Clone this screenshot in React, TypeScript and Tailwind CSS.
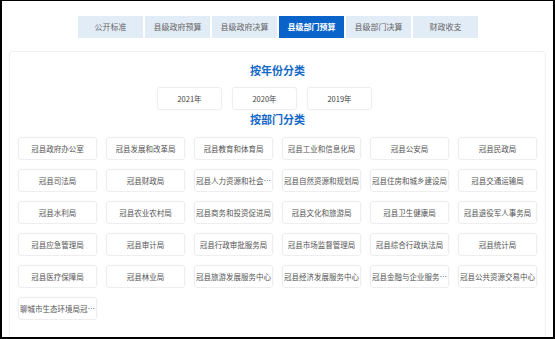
const tabs = ['公开标准', '县级政府预算', '县级政府决算', '县级部门预算', '县级部门决算', '财政收支'];
const years = ['2021年', '2020年', '2019年'];
const depts = [
  '冠县政府办公室', '冠县发展和改革局', '冠县教育和体育局', '冠县工业和信息化局', '冠县公安局', '冠县民政局',
  '冠县司法局', '冠县财政局', '冠县人力资源和社会保障局', '冠县自然资源和规划局', '冠县住房和城乡建设局', '冠县交通运输局',
  '冠县水利局', '冠县农业农村局', '冠县商务和投资促进局', '冠县文化和旅游局', '冠县卫生健康局', '冠县退役军人事务局',
  '冠县应急管理局', '冠县审计局', '冠县行政审批服务局', '冠县市场监督管理局', '冠县综合行政执法局', '冠县统计局',
  '冠县医疗保障局', '冠县林业局', '冠县旅游发展服务中心', '冠县经济发展服务中心', '冠县金融与企业服务中心', '冠县公共资源交易中心',
  '聊城市生态环境局冠县分局',
];

const font = { fontFamily: '"Noto Sans CJK SC", "Noto Sans", sans-serif' };

export default function App() {
  const active = 3;
  return (
    <div className="w-[555px] h-[339px] overflow-hidden bg-white border-l-2 border-r-2 border-t border-b-2 border-black" style={font}>
      {/* Tabs */}
      <div className="flex justify-center gap-[2px] pt-[15px] pl-[1px]">
        {tabs.map((t, i) => (
          <div key={t}
            className={`w-[65px] h-[22px] flex items-center justify-center text-[8px] ${
              i === active ? 'bg-[#0a63c9] text-white font-bold' : 'bg-[#e2ecf7] text-[#666]'
            }`}>
            {t}
          </div>
        ))}
      </div>

      {/* Card */}
      <div className="mt-[13px] ml-[7px] w-[537px] h-[300px] border border-[#efefef] rounded-[3px] px-[8px]">
        <h3 className="mt-[11px] text-center text-[11px] leading-[14px] font-bold text-[#1468c8]">按年份分类</h3>
        <div className="mt-[10px] flex justify-center gap-[10px] pr-[26px]">
          {years.map(y => (
            <div key={y}
              className="w-[65px] h-[23px] flex items-center justify-center border border-[#eee] rounded-[3px] text-[7.5px] text-[#444] shadow-[0_0_2px_rgba(0,0,0,0.04)]">
              {y}
            </div>
          ))}
        </div>
        <h3 className="mt-[2px] text-center text-[11px] leading-[14px] font-bold text-[#1468c8]">按部门分类</h3>
        <div className="mt-[11px] grid grid-cols-6 gap-[9px]">
          {depts.map(d => (
            <div key={d}
              className="h-[23px] flex items-center justify-center border border-[#eee] rounded-[3px] px-px text-[7.5px] text-[#555] shadow-[0_0_2px_rgba(0,0,0,0.04)]">
              <span className="truncate">{d}</span>
            </div>
          ))}
        </div>
      </div>
    </div>
  );
}
